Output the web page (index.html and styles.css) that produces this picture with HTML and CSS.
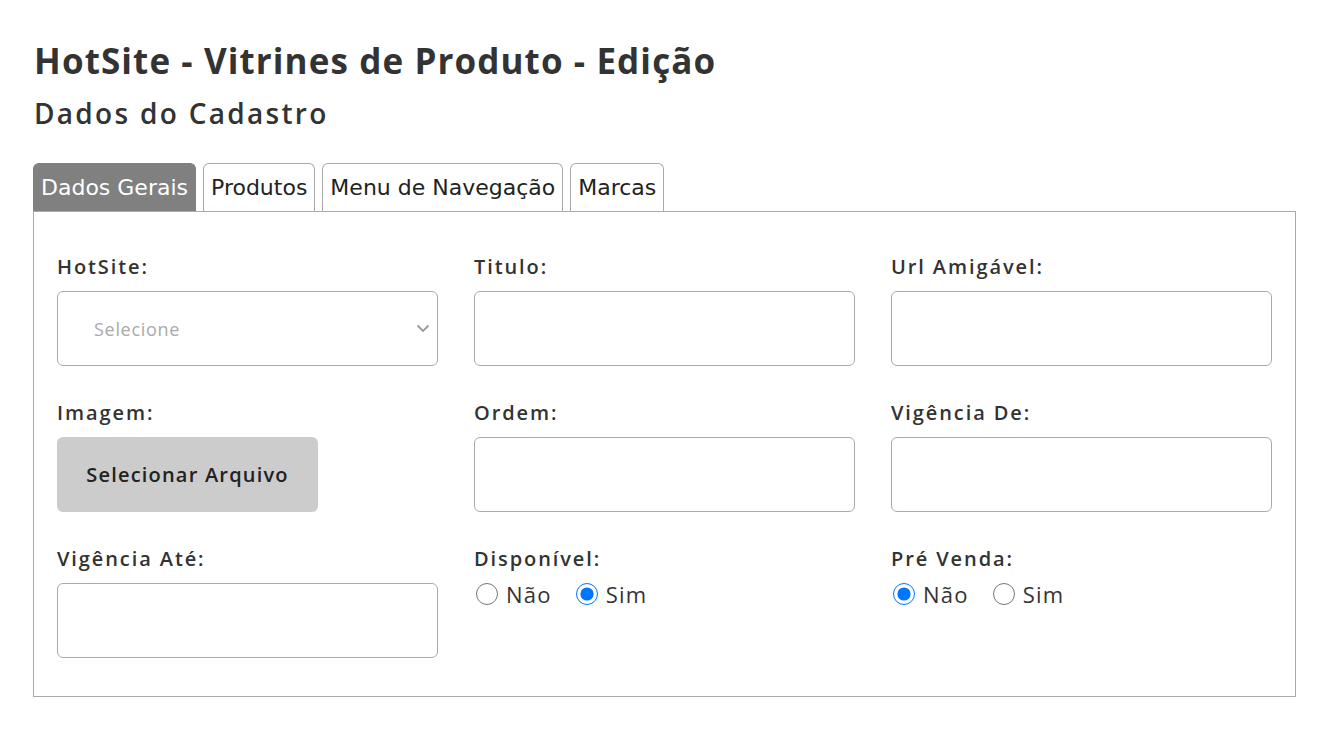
FILE: index.html
```html
<!DOCTYPE html>
<html>
	<head>
		<meta charset="UTF-8">
		<title>HotSite - Vitrines de Produto - Edição</title>
		<link rel="stylesheet" href="styles.css">
	</head>
	<body>
		<h1 class="titulo">HotSite - Vitrines de Produto - Edição</h1>
		<h2 class="subtitulo">Dados do Cadastro</h2>
		<div class="abas">
			<ul class="abas-lista">
				<li class="aba ativa">Dados Gerais</li>
				<li class="aba">Produtos</li>
				<li class="aba">Menu de Navegação</li>
				<li class="aba">Marcas</li>
			</ul>
			<div class="aba-painel">
				<div class="campos">
					<div class="campo">
						<label class="rotulo">HotSite:</label>
						<div class="seletor-caixa">
							<select class="caixa seletor">
								<option>Selecione</option>
							</select>
							<svg class="seta" width="14" height="9" viewBox="0 0 14 9"><path d="M1.5 1.5 L7 7 L12.5 1.5" fill="none" stroke="#999" stroke-width="1.8"/></svg>
						</div>
					</div>
					<div class="campo">
						<label class="rotulo">Titulo:</label>
						<input class="caixa" type="text">
					</div>
					<div class="campo">
						<label class="rotulo">Url Amigável:</label>
						<input class="caixa" type="text">
					</div>
					<div class="campo">
						<label class="rotulo">Imagem:</label>
						<button class="botao-arquivo" type="button">Selecionar Arquivo</button>
					</div>
					<div class="campo">
						<label class="rotulo">Ordem:</label>
						<input class="caixa" type="text">
					</div>
					<div class="campo">
						<label class="rotulo">Vigência De:</label>
						<input class="caixa" type="text">
					</div>
					<div class="campo">
						<label class="rotulo">Vigência Até:</label>
						<input class="caixa" type="text">
					</div>
					<div class="campo">
						<label class="rotulo">Disponível:</label>
						<div class="opcoes">
							<label class="opcao"><input type="radio" name="disponivel"> Não</label>
							<label class="opcao"><input type="radio" name="disponivel" checked> Sim</label>
						</div>
					</div>
					<div class="campo">
						<label class="rotulo">Pré Venda:</label>
						<div class="opcoes">
							<label class="opcao"><input type="radio" name="prevenda" checked> Não</label>
							<label class="opcao"><input type="radio" name="prevenda"> Sim</label>
						</div>
					</div>
				</div>
			</div>
		</div>
	</body>
</html>
```

FILE: styles.css
```css
body{
	margin:0;
	padding:0 26px 0 33px;
	font-family:"Open Sans", "Liberation Sans", sans-serif;
	color:#333;
	background:#fff;
}
.titulo{
	margin:38px 0 0 1px;
	font-size:35px;
	line-height:46px;
	font-weight:700;
	letter-spacing:1.1px;
}
.subtitulo{
	margin:10px 0 0 1px;
	font-size:28px;
	line-height:38px;
	font-weight:600;
	letter-spacing:2.3px;
}
.abas{
	margin-top:31px;
}
.abas-lista{
	display:flex;
	gap:7px;
	margin:0;
	padding:0;
	list-style:none;
}
.aba{
	height:47px;
	padding:0 7px;
	border:1px solid #aaa;
	border-bottom:none;
	border-radius:6px 6px 0 0;
	font:22px/47px "DejaVu Sans", sans-serif;
	color:#222;
	background:#fff;
}
.aba.ativa{
	background:#808080;
	border-color:#808080;
	color:#fff;
}
.aba-painel{
	border:1px solid #aaa;
	padding:40px 23px 38px 23px;
}
.campos{
	display:grid;
	grid-template-columns:repeat(3, 1fr);
	column-gap:36px;
	row-gap:32px;
}
.campo{
	display:flex;
	flex-direction:column;
}
.rotulo{
	height:39px;
	font-size:20px;
	line-height:30px;
	font-weight:600;
	letter-spacing:1.9px;
	color:#333;
}
.caixa{
	box-sizing:border-box;
	height:75px;
	width:100%;
	border:1px solid #aaa;
	border-radius:6px;
	background:#fff;
	font:17px "Open Sans", sans-serif;
}
.seletor-caixa{
	position:relative;
}
.seletor{
	appearance:none;
	padding-left:36px;
	font-size:18px;
	letter-spacing:0.7px;
	color:#aaa;
}
.seta{
	position:absolute;
	right:8px;
	top:33px;
	pointer-events:none;
}
.botao-arquivo{
	width:261px;
	height:75px;
	border:none;
	border-radius:6px;
	background:#ccc;
	color:#222;
	font:600 20px "Open Sans", sans-serif;
	letter-spacing:1.2px;
}
.opcoes{
	display:flex;
	gap:22px;
}
.opcao{
	display:flex;
	align-items:center;
	gap:8px;
	font-size:22px;
	line-height:22px;
	letter-spacing:1.2px;
	color:#333;
}
.opcao input{
	width:22px;
	height:22px;
	margin:0 0 0 2px;
}
```
